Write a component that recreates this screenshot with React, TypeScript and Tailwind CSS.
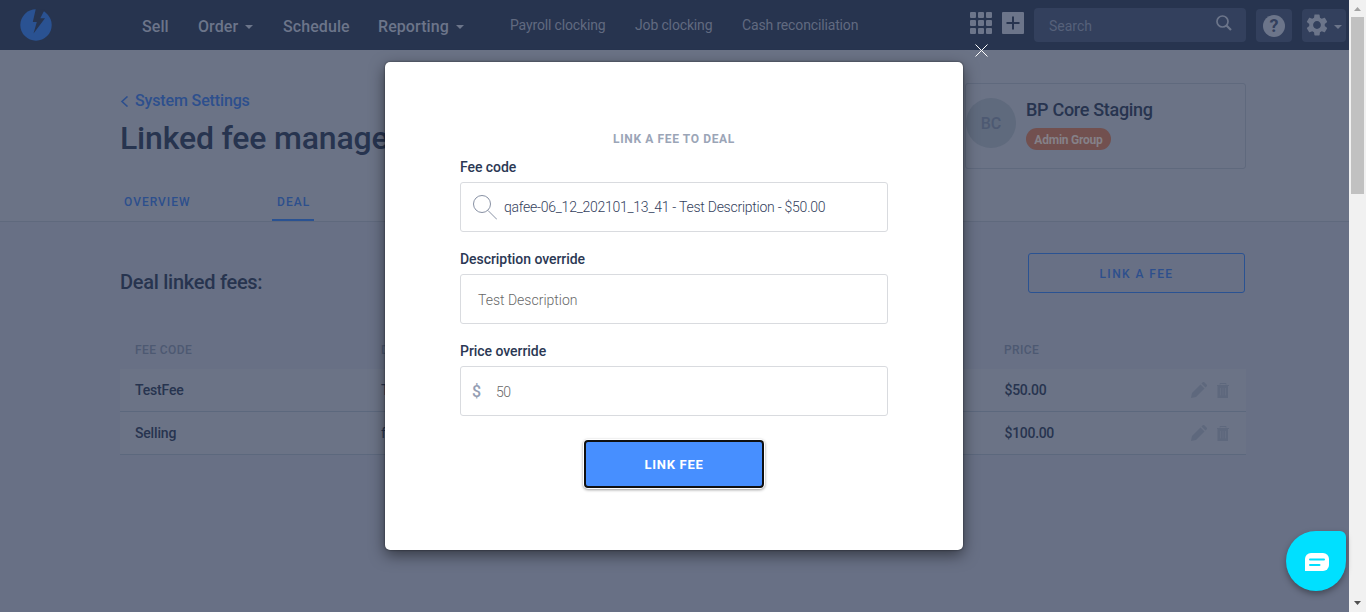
import type { ReactNode } from "react";
import { MdSettings } from "react-icons/md";

function Caret({ className = "" }: { className?: string }) {
  return (
    <svg className={className} width="8" height="4" viewBox="0 0 8 4" fill="currentColor">
      <path d="M0 0h8L4 4z" />
    </svg>
  );
}

function Pencil() {
  return (
    <svg width="16" height="16" viewBox="0 0 16 16" fill="#5e687d">
      <path d="M0 16l1-5L9.500 2.500l4 4L5 15z" />
      <path d="M10.500 1.500L12 0l1 0 3 3v1l-1.500 1.500z" />
    </svg>
  );
}

function Trash() {
  return (
    <svg width="12" height="15" viewBox="0 0 12 15" fill="none" stroke="#5e687d">
      <path d="M0 2.500h12M3 1.500v-1h6v1" strokeWidth="1" />
      <path d="M.5 3h10.500v12H.5z" fill="#5e687d" stroke="none" />
      <path d="M3.500 5v7.500M6 5v7.500M8.500 5v7.500" stroke="#677084" strokeWidth=".8" />
    </svg>
  );
}

function Field({ label, children }: { label: string; children: ReactNode }) {
  return (
    <div className="h-[92px]">
      <div className="flex h-[30px] items-center text-sm font-medium tracking-[-0.05px] text-[#2b3854]">{label}</div>
      <div className="flex h-[50px] items-center rounded-[3px] border border-[#d9dbdf] text-sm font-light">
        {children}
      </div>
    </div>
  );
}

const rows = [
  { code: "TestFee", desc: "Test", price: "$50.00" },
  { code: "Selling", desc: "fee", price: "$100.00" },
];

function Header() {
  return (
    <header className="flex h-[50px] bg-[#27344f] whitespace-nowrap text-[#6c758a]">
      <svg className="mt-[9px] ml-5 shrink-0" width="32" height="32" viewBox="0 0 32 32">
        <circle cx="16" cy="16" r="15.700" fill="#2a5292" />
        <path d="M16 -1L12.800 13h4l-3.300 11.500L25 9.200h-4.700L24.500 1z" fill="#27344f" />
      </svg>
      <nav className="flex h-[53px] shrink-0 items-center text-base font-medium tracking-[0.08px]">
        <span className="ml-[90px] w-[56px]">Sell</span>
        <span className="flex w-[85px] items-center gap-[7px]">Order <Caret /></span>
        <span className="w-[95px]">Schedule</span>
        <span className="flex w-[132px] items-center gap-[7px]">Reporting <Caret /></span>
      </nav>
      <nav className="flex h-[50px] w-[460px] shrink-0 items-center text-sm tracking-[-0.15px] text-[#616a80]">
        <span className="w-[125px]">Payroll clocking</span>
        <span className="w-[107px]">Job clocking</span>
        <span>Cash reconciliation</span>
      </nav>
      <div className="mt-3 grid h-[22px] w-[22px] shrink-0 grid-cols-3 gap-[2px]">
        {Array.from({ length: 9 }, (_, i) => (
          <i key={i} className="rounded-[1px] bg-[#6c758a]" />
        ))}
      </div>
      <svg className="mt-3 ml-[10px] shrink-0" width="22" height="22" viewBox="0 0 22 22">
        <rect width="22" height="22" rx="1" fill="#6c758a" />
        <path d="M11 4.500v13M4.500 11h13" stroke="#27344f" strokeWidth="2" />
      </svg>
      <div className="mt-2 ml-[10px] flex h-[34px] w-[212px] shrink-0 justify-between rounded-[4px] bg-[#33405d] pr-[14px] pl-[15px] text-sm">
        <span className="pt-[8px] text-[#56617a]">Search</span>
        <svg className="mt-[7px]" width="16" height="16" viewBox="0 0 16 16" fill="none" stroke="#6c758a" strokeWidth="1.700">
          <circle cx="6.500" cy="6.500" r="5.500" />
          <path d="M10.500 10.500L15 15" strokeWidth="2.200" />
        </svg>
      </div>
      <div className="mt-[9px] ml-[10px] flex h-[33px] w-9 shrink-0 items-center justify-center rounded-[4px] bg-[#33405d]">
        <span className="flex size-[22px] items-center justify-center rounded-full bg-[#6c758a] text-[18px] leading-none font-bold text-[#33405d]">?</span>
      </div>
      <div className="mt-[9px] ml-[10px] flex h-[33px] w-11 shrink-0 items-center rounded-[4px] bg-[#33405d] pl-[2px]">
        <MdSettings size={26} className="mt-[-2px]" />
        <Caret className="mt-[3px] ml-1" />
      </div>
    </header>
  );
}

function Modal() {
  return (
    <div className="absolute top-[62px] left-[385px] h-[488px] w-[578px] rounded-[5px] bg-white px-[75px] pt-[66px] whitespace-nowrap shadow-[0_5px_15px_rgba(0,0,0,0.5),0_0_2px_rgba(0,0,0,0.6)]">
      <div className="flex h-[22px] items-center justify-center text-xs font-bold tracking-[0.63px] text-[#9ba5b7]">
        <span>LINK A FEE TO DEAL</span>
      </div>
      <div className="mt-[2px]">
        <Field label="Fee code">
          <svg className="ml-3 shrink-0" width="24" height="25" viewBox="0 0 24 25" fill="none" stroke="#8790a3">
            <circle cx="9" cy="9" r="8.500" />
            <path d="M15 15.500l9 9" />
          </svg>
          <span className="ml-[7px] tracking-[-0.25px] text-[#34415d]">qafee-06_12_202101_13_41 - Test Description - $50.00</span>
        </Field>
        <Field label="Description override">
          <span className="mt-[2px] ml-[17px] text-[#686868]">Test Description</span>
        </Field>
        <Field label="Price override">
          <span className="mt-[2px] ml-[11px] w-6 text-base font-medium text-[#949eb3]">$</span>
          <span className="mt-[2px] tracking-[-0.4px] text-[#686868]">50</span>
        </Field>
      </div>
      <button className="mx-auto mt-[12px] flex h-[48px] w-[180px] items-center justify-center rounded-[4px] border-2 border-[#101010] bg-[#478fff] pt-[2px] text-[13px] font-bold tracking-[0.7px] text-white shadow-[0_0_0_1px_#ffffff,0_1px_3px_1px_rgba(0,0,0,0.4)]">
        <span>LINK FEE</span>
      </button>
    </div>
  );
}

export default function App() {
  return (
    <div className="relative flex h-[612px] w-[1366px] overflow-hidden bg-[#687085] font-['Roboto',sans-serif]">
      <div className="w-[1349px] shrink-0">
        <Header />
        <section className="flex h-[172px] justify-between border-b border-[#5f697d] bg-[#6b7386] pr-[103px] pl-[120px]">
          <div className="pt-[40px] whitespace-nowrap">
            <div className="flex h-[22px] items-center text-base font-medium tracking-[-0.14px] text-[#2d4f8d]">
              <svg className="mr-[6px]" width="9" height="11" viewBox="0 0 9 11" fill="none" stroke="currentColor" strokeWidth="1.600">
                <path d="M7.500 .5L2 5.500l5.500 5" />
              </svg>
              <span>System Settings</span>
            </div>
            <h1 className="flex h-[52px] items-center text-[32px] font-medium tracking-[-0.17px] text-[#27344f]">Linked fee management</h1>
            <div className="mt-[16px] flex h-[41px] text-xs font-medium text-[#2d4f8d]">
              <span className="ml-1 flex h-[41px] w-[148px] items-center pt-[2px] tracking-[1px]">OVERVIEW</span>
              <span className="flex h-[41px] w-[42px] items-center border-b-2 border-[#2a5292] pt-1 pl-[5px] tracking-[1.100px]">DEAL</span>
            </div>
          </div>
          <div className="mt-[33px] flex h-[86px] w-[281px] rounded-[3px] border border-[#5f697d] whitespace-nowrap">
            <div className="mt-[14px] flex size-[50px] items-center justify-center rounded-full bg-[#5f6a7d] pt-[2px] text-base font-medium text-[#4d5972]">BC</div>
            <div className="ml-[10px] pt-[14px]">
              <div className="flex h-6 items-center text-lg leading-6 font-medium tracking-[-0.3px] text-[#27344f]">BP Core Staging</div>
              <div className="mt-[6px] flex h-[22px] w-[85px] items-center justify-center rounded-full bg-[#72504f] pt-px text-xs font-bold tracking-[-0.22px] text-[#858188]">Admin Group</div>
            </div>
          </div>
        </section>
        <main className="pr-[103px] pl-[120px] text-[#27344f]">
          <div className="flex h-[108px] justify-between pt-[31px]">
            <h2 className="mt-[15px] h-7 text-xl leading-7 font-medium tracking-[-0.27px]">Deal linked fees:</h2>
            <button className="mr-px flex h-10 w-[217px] items-center justify-center rounded-[3px] border border-[#2a5292] pt-[2px] text-xs font-medium tracking-[1.400px] text-[#2d4f8d]"><span>LINK A FEE</span></button>
          </div>
          <div className="grid h-[39px] grid-cols-[246px_623px_1fr] items-center pl-[15px] text-xs font-medium tracking-[0.4px] text-[#4d5972]">
            <span>FEE CODE</span>
            <span>DESCRIPTION</span>
            <span>PRICE</span>
          </div>
          {rows.map((row) => (
            <div key={row.code} className="grid h-[43px] grid-cols-[246px_623px_1fr_auto] items-center border-b border-[#5c687d] bg-[#6b7386] pr-[17px] pl-[15px] text-sm font-medium tracking-[-0.18px]">
              <span>{row.code}</span>
              <span className="font-normal">{row.desc}</span>
              <span className="ml-[0.5px] tracking-[-0.3px]">{row.price}</span>
              <span className="flex items-center gap-[10px]">
                <Pencil />
                <Trash />
              </span>
            </div>
          ))}
        </main>
      </div>
      <aside className="flex w-[17px] shrink-0 flex-col items-center bg-[#f1f1f1]">
        <svg className="mt-[7px]" width="7" height="4" viewBox="0 0 7 4"><path d="M0 4h7L3.500 0z" fill="#a3a3a3" /></svg>
        <div className="mt-[6px] h-[177px] w-[13px] bg-[#c1c1c1]" />
        <svg className="mt-auto mb-[7px]" width="7" height="4" viewBox="0 0 7 4"><path d="M0 0h7L3.500 4z" fill="#505050" /></svg>
      </aside>
      <svg className="absolute top-[44px] left-[975px]" width="13" height="13" viewBox="0 0 13 13" stroke="#ffffff" strokeWidth="1">
        <path d="M.5.5l12 12M12.500.5l-12 12" />
      </svg>
      <Modal />
      <div className="absolute top-[531px] left-[1286px] flex size-[60px] items-center justify-center rounded-[30px] rounded-tr-[6px] bg-[#00e0ff] shadow-[0_3px_6px_rgba(0,0,0,0.35)]">
        <svg className="mt-[2px] ml-[2px]" width="24" height="18" viewBox="0 0 24 18">
          <path d="M6 0h12a6 6 0 0 1 6 6v6a6 6 0 0 1-6 6H0V6a6 6 0 0 1 6-6z" fill="#ffffff" />
          <path d="M5 6.500h14M5 12h9.500" stroke="#00e0ff" strokeWidth="2" strokeLinecap="round" />
        </svg>
      </div>
    </div>
  );
}
